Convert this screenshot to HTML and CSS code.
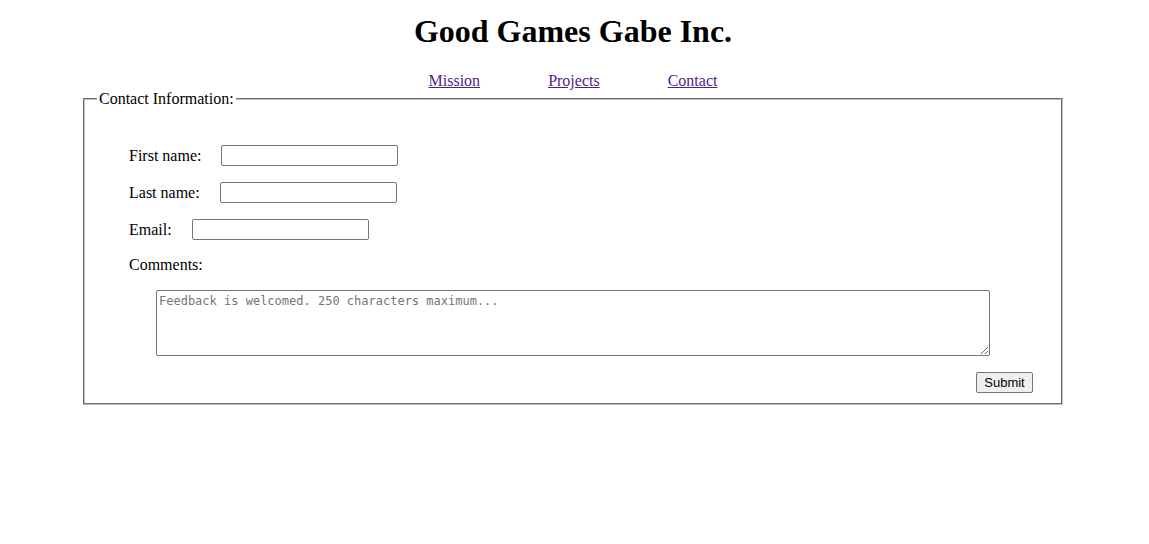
FILE: index.html
```
<!DOCTYPE html>
<html lang="en">
<head>
<meta charset="utf-8">
<title>Good Games Gabe Inc.</title>
<link rel="stylesheet" href="styles.css">
</head>
<body class="page">
<header>
<h1 class="title">Good Games Gabe Inc.</h1>
<nav class="nav">
<a class="nav-link" href="#mission">Mission</a>
<a class="nav-link" href="#projects">Projects</a>
<a class="nav-link" href="#contact">Contact</a>
</nav>
</header>
<main>
<form class="contact-form">
<fieldset class="panel">
<legend class="panel-title">Contact Information:</legend>
<div class="field"><label for="first">First name:</label><input class="text-input" id="first" type="text"></div>
<div class="field"><label for="last">Last name:</label><input class="text-input" id="last" type="text"></div>
<div class="field"><label for="email">Email:</label><input class="text-input" id="email" type="email"></div>
<div class="field"><label for="comments">Comments:</label></div>
<textarea class="comments" id="comments" maxlength="250" placeholder="Feedback is welcomed. 250 characters maximum..."></textarea>
<div class="actions"><button class="submit" type="submit">Submit</button></div>
</fieldset>
</form>
</main>
</body>
</html>
```
FILE: styles.css
```
.page {
  margin: 0;
  padding-right: 3px;
  background: #fff;
  color: #000;
  font: 16px/18px "Liberation Serif", "Times New Roman", serif;
}

.title {
  margin: 13px 0 22px;
  font-size: 32px;
  line-height: 37px;
  text-align: center;
}

.nav {
  display: flex;
  justify-content: center;
  gap: 68px;
}

.nav-link {
  color: #551a8b;
}

.contact-form {
  margin: 0 83px;
}

.panel {
  margin: 0;
  padding: 37px 28px 10px 44px;
  border: 2px groove #c0c0c0;
}

.panel-title {
  margin-left: -32px;
  padding: 0 2px;
}

.field {
  display: flex;
  align-items: center;
  gap: 20px;
  margin-bottom: 16px;
}

.text-input {
  box-sizing: border-box;
  width: 177px;
  height: 21px;
  padding: 1px 2px;
  border: 1px solid #767676;
  border-radius: 2px;
}

.comments {
  display: block;
  box-sizing: border-box;
  width: calc(100% - 70px);
  height: 66px;
  margin: 0 0 16px 27px;
  padding: 2px;
  border: 1px solid #767676;
  border-radius: 2px;
  font: 12px/16px "DejaVu Sans Mono", monospace;
}

.comments::placeholder {
  color: #757575;
}

.actions {
  display: flex;
  justify-content: flex-end;
}

.submit {
  min-width: 57px;
  height: 21px;
  padding: 1px 6px;
  border: 1px solid #767676;
  border-radius: 2px;
  background: #efefef;
  color: #000;
  font: 13px/16px "Liberation Sans", Arial, sans-serif;
}
```
